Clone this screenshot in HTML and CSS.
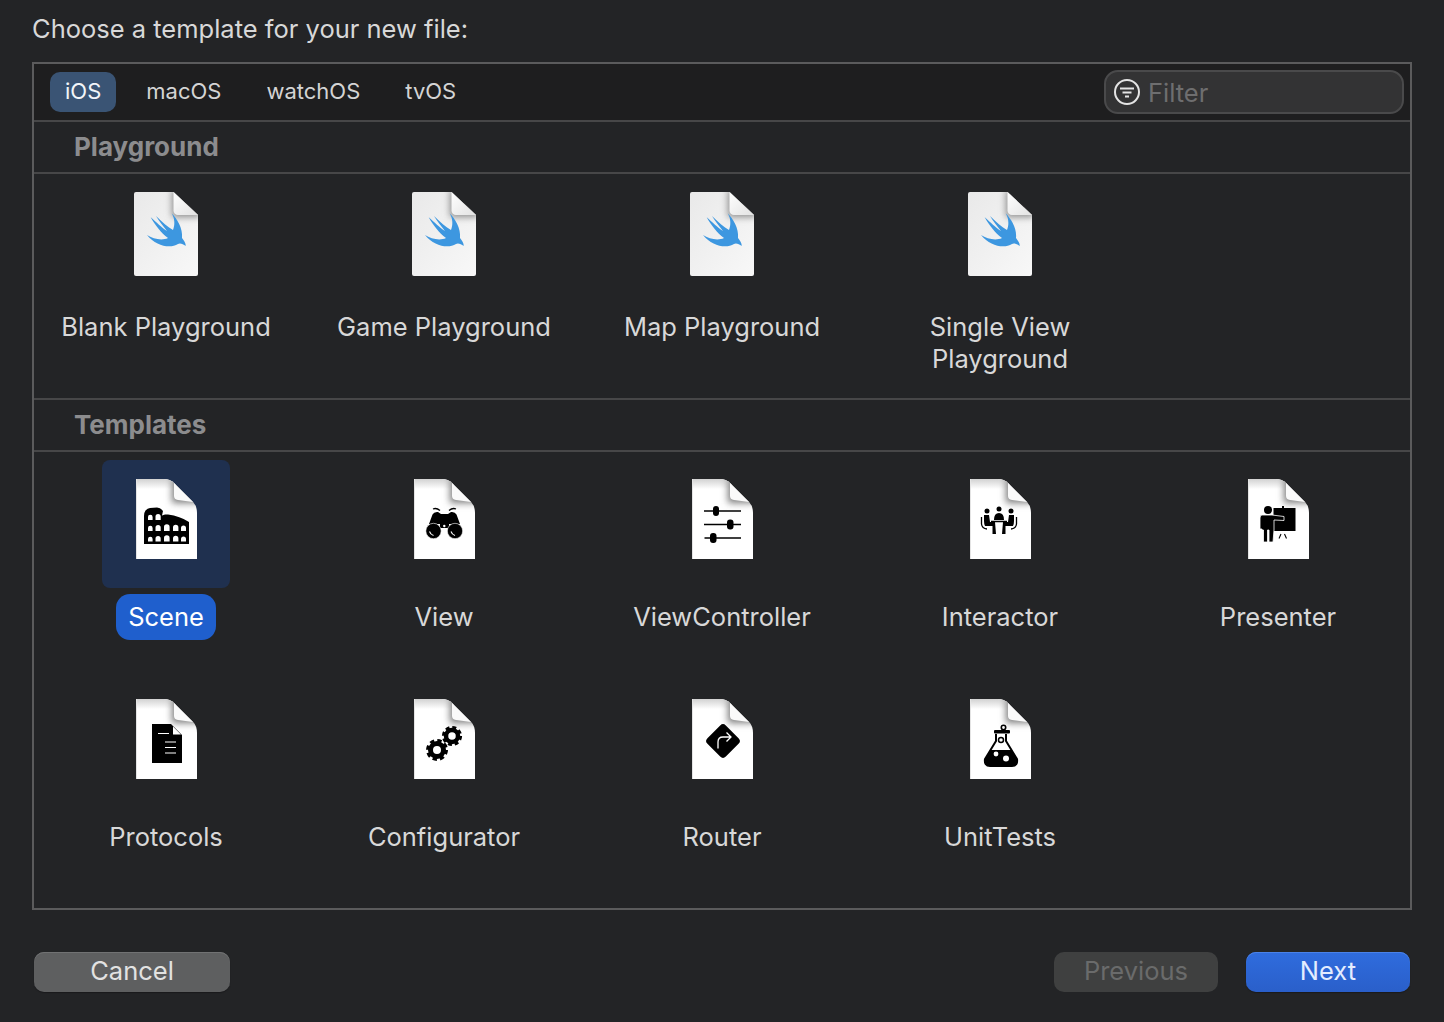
FILE: index.html
```html
<!DOCTYPE html>
<html lang="en">
<head>
  <meta charset="UTF-8">
  <title>Choose a template</title>
  <link rel="stylesheet" href="styles.css">
</head>
<body>
<svg class="defs" width="0" height="0" aria-hidden="true">
  <defs>
    <linearGradient id="swiftBody" x1="0" y1="0" x2="1" y2="1">
      <stop offset="0" stop-color="#e9e9e9"/>
      <stop offset="1" stop-color="#f8f8f8"/>
    </linearGradient>
    <linearGradient id="swiftFold" x1="0" y1="0" x2="1" y2="1">
      <stop offset="0" stop-color="#ffffff"/>
      <stop offset="1" stop-color="#e2e2e2"/>
    </linearGradient>
    <linearGradient id="fileTop" x1="0" y1="0" x2="0" y2="1">
      <stop offset="0" stop-color="#d2d2d2"/>
      <stop offset="1" stop-color="#ffffff"/>
    </linearGradient>
    <linearGradient id="fileLeft" x1="0" y1="0" x2="1" y2="0">
      <stop offset="0" stop-color="#c9c9c9"/>
      <stop offset="1" stop-color="#ffffff"/>
    </linearGradient>
    <filter id="soft" x="-50%" y="-50%" width="200%" height="200%">
      <feGaussianBlur stdDeviation="3.500"/>
    </filter>
    <clipPath id="swiftClip">
      <path d="M2 0H39.500L64 23V82a2 2 0 0 1-2 2H2a2 2 0 0 1-2-2V2a2 2 0 0 1 2-2Z"/>
    </clipPath>
    <clipPath id="fileClip">
      <path d="M0 0H28Q34 0 38 4L57 23Q61 27 61 34V80H0Z"/>
    </clipPath>

    <symbol id="swift-file" viewBox="0 0 64 84">
      <path d="M2 0H39.500L64 23V82a2 2 0 0 1-2 2H2a2 2 0 0 1-2-2V2a2 2 0 0 1 2-2Z" fill="url(#swiftBody)"/>
      <g clip-path="url(#swiftClip)">
        <path d="M38 -2H66V25H38Z" fill="#8c8c8c" filter="url(#soft)"/>
      </g>
      <path d="M39.500 0L64 23H44a4.500 4.500 0 0 1-4.500-4.500Z" fill="url(#swiftFold)"/>
      <path d="M37.700 21.300C43 27 49 36 48 46C50 49 52 51 51.700 54C49 52 46 50.500 44 52C36 57 22 54 13 43C19 47 28 49 34 46C27 41 21 33 16.700 25.300C22 30 28 36 33 39C29 34 25 29 22 24C28 30 34 35 39 38C41 33 41 27 37.700 21.300Z" fill="#3d97e0"/>
    </symbol>

    <symbol id="file" viewBox="0 0 61 80">
      <path d="M0 0H28Q34 0 38 4L57 23Q61 27 61 34V80H0Z" fill="#fff"/>
      <g clip-path="url(#fileClip)">
        <rect x="0" y="0" width="40" height="10" fill="url(#fileTop)"/>
        <path d="M36 0H63V24H36Z" fill="#7c7c7c" filter="url(#soft)"/>
        <rect x="0" y="0" width="1" height="80" fill="url(#fileLeft)"/>
      </g>
      <path d="M38 4L57 23L42 21Q38 20.500 38 17Z" fill="#fafafa"/>
    </symbol>
  </defs>
</svg>

<div class="page">
  <h1 class="title">Choose a template for your new file:</h1>

  <div class="chooser">
    <div class="toolbar">
      <div class="tabs">
        <span class="tab tab-active">iOS</span>
        <span class="tab">macOS</span>
        <span class="tab">watchOS</span>
        <span class="tab">tvOS</span>
      </div>
      <div class="filter">
        <svg class="filter-icon" width="28" height="28" viewBox="0 0 28 28">
          <circle cx="14" cy="14" r="12" fill="none" stroke="#e4e4e4" stroke-width="2"/>
          <path d="M7 10.500H21M9.500 14.500H18.500M12 18.500H16" fill="none" stroke="#e4e4e4" stroke-width="2"/>
        </svg>
        <span class="filter-text">Filter</span>
      </div>
    </div>

    <div class="section-head">Playground</div>
    <div class="grid grid-playground">
      <div class="item">
        <div class="tile"><svg class="swift-icon"><use href="#swift-file"/></svg></div>
        <div class="label">Blank Playground</div>
      </div>
      <div class="item">
        <div class="tile"><svg class="swift-icon"><use href="#swift-file"/></svg></div>
        <div class="label">Game Playground</div>
      </div>
      <div class="item">
        <div class="tile"><svg class="swift-icon"><use href="#swift-file"/></svg></div>
        <div class="label">Map Playground</div>
      </div>
      <div class="item">
        <div class="tile"><svg class="swift-icon"><use href="#swift-file"/></svg></div>
        <div class="label">Single View<br>Playground</div>
      </div>
    </div>

    <div class="section-head">Templates</div>
    <div class="grid grid-templates">
      <div class="item item-selected">
        <div class="tile">
          <svg class="file-icon" viewBox="0 0 61 80">
            <use href="#file" width="61" height="80"/>
            <path d="M8 65V37Q8 30 14 29L21 28.500Q25 29 27 32L26 36.500L29 35.500L32 35.500Q44 37 53 43V65Z"/>
            <g fill="#fff">
              <path d="M12 41V38a2.300 2.300 0 0 1 4.600 0V41ZM19.500 41V37.500a2.600 2.600 0 0 1 5.200 0V41Z"/>
              <path d="M12 52V49a2.300 2.300 0 0 1 4.600 0V52ZM19.500 52V48.500a2.600 2.600 0 0 1 5.200 0V52ZM28 52V48a2.800 2.800 0 0 1 5.600 0V52ZM37 52V48.500a2.700 2.700 0 0 1 5.400 0V52ZM45 52V49a2.500 2.500 0 0 1 5 0V52Z"/>
              <path d="M12 62.500V60a2.300 2.300 0 0 1 4.600 0V62.500ZM19.500 62.500V59.500a2.600 2.600 0 0 1 5.200 0V62.500ZM28 62.500V59a2.800 2.800 0 0 1 5.600 0V62.500ZM37 62.500V59.500a2.700 2.700 0 0 1 5.400 0V62.500ZM45 62.500V60a2.500 2.500 0 0 1 5 0V62.500Z"/>
            </g>
          </svg>
        </div>
        <div class="label">Scene</div>
      </div>

      <div class="item">
        <div class="tile">
          <svg class="file-icon" viewBox="0 0 61 80">
            <use href="#file" width="61" height="80"/>
            <path d="M15 45L18.500 35.500Q20 32.500 24 33L27 35H34L37 33Q41 32.500 42.500 35.500L46 45Z"/>
            <path d="M19 30Q22.500 28.500 26 31.500M35 31.500Q38.500 28.500 42 30" fill="none" stroke="#000" stroke-width="1.300"/>
            <rect x="26" y="44" width="9" height="5"/>
            <circle cx="19.500" cy="52" r="7.700" stroke="#fff" stroke-width=".6"/>
            <circle cx="41" cy="52" r="7.700" stroke="#fff" stroke-width=".6"/>
            <path d="M15.500 52.500Q16.500 55.500 19.500 56.500M37 52.500Q38 55.500 41 56.500" fill="none" stroke="#fff" stroke-width="1.100"/>
            <circle cx="30.300" cy="47" r="1.200" fill="#fff"/>
          </svg>
        </div>
        <div class="label">View</div>
      </div>

      <div class="item">
        <div class="tile">
          <svg class="file-icon" viewBox="0 0 61 80">
            <use href="#file" width="61" height="80"/>
            <path d="M12 32H49M12 45.500H49M12.500 59H49" fill="none" stroke="#000" stroke-width="1.300"/>
            <rect x="21" y="27" width="6" height="10" rx="3"/>
            <rect x="35" y="40.500" width="6.500" height="10" rx="3"/>
            <rect x="18" y="54" width="6.500" height="10" rx="3"/>
          </svg>
        </div>
        <div class="label">ViewController</div>
      </div>

      <div class="item">
        <div class="tile">
          <svg class="file-icon" viewBox="0 0 61 80">
            <use href="#file" width="61" height="80"/>
            <circle cx="17" cy="32" r="2.500"/>
            <circle cx="29" cy="30" r="2.500"/>
            <circle cx="41" cy="32" r="2.500"/>
            <path d="M24 41Q24 34 29 34Q34 34 34 41Z"/>
            <path d="M21 42.500H37" stroke="#000" stroke-width="1.500"/>
            <path d="M14 36H19L20 43H25L26 55H22.500V47H15Q14 45 14 42Z"/>
            <path d="M44 36H39L38 43H33L32 55H35.500V47H43Q44 45 44 42Z"/>
            <path d="M11.500 38V45Q12 49.500 17 50M46.500 38V45Q46 49.500 41 50" fill="none" stroke="#000" stroke-width="1.300"/>
          </svg>
        </div>
        <div class="label">Interactor</div>
      </div>

      <div class="item">
        <div class="tile">
          <svg class="file-icon" viewBox="0 0 61 80">
            <use href="#file" width="61" height="80"/>
            <rect x="25.500" y="29" width="22" height="23"/>
            <path d="M34 27H36V30H34Z"/>
            <circle cx="20" cy="31" r="4"/>
            <path d="M14 36H24L36 37.500V41.500L26 41V51L25 63H21V51H19.500V63H15.500V51H14V50H12V39Q12 36 14 36Z" stroke="#fff" stroke-width=".8"/>
            <path d="M33 55L31 59.500M36.500 55L38.500 59.500" fill="none" stroke="#000" stroke-width="1.100"/>
          </svg>
        </div>
        <div class="label">Presenter</div>
      </div>

      <div class="item">
        <div class="tile">
          <svg class="file-icon" viewBox="0 0 61 80">
            <use href="#file" width="61" height="80"/>
            <path d="M16 25H35L46 36V64H16Z"/>
            <path d="M37 27.500V35.500H45Z" fill="#fff"/>
            <path d="M22 34.500H33M29 43H40M29 48.500H40M29 54H40" fill="none" stroke="#fff" stroke-width="1.200"/>
          </svg>
        </div>
        <div class="label">Protocols</div>
      </div>

      <div class="item">
        <div class="tile">
          <svg class="file-icon" viewBox="0 0 61 80">
            <use href="#file" width="61" height="80"/>
            <circle cx="23" cy="51" r="6.500" fill="none" stroke="#000" stroke-width="5"/>
            <circle cx="23" cy="51" r="9.200" fill="none" stroke="#000" stroke-width="3.600" stroke-dasharray="4.200 3.030"/>
            <circle cx="38" cy="37" r="6" fill="none" stroke="#000" stroke-width="4.500"/>
            <circle cx="38" cy="37" r="8.500" fill="none" stroke="#000" stroke-width="3.200" stroke-dasharray="3.900 2.780"/>
          </svg>
        </div>
        <div class="label">Configurator</div>
      </div>

      <div class="item">
        <div class="tile">
          <svg class="file-icon" viewBox="0 0 61 80">
            <use href="#file" width="61" height="80"/>
            <rect x="18" y="29" width="26" height="26" rx="4" transform="rotate(45 31 42)"/>
            <path d="M26 49.500V43Q26 38 31 38H39M34.500 33.500L39 38L34.500 42.500" fill="none" stroke="#fff" stroke-width="1.300"/>
          </svg>
        </div>
        <div class="label">Router</div>
      </div>

      <div class="item">
        <div class="tile">
          <svg class="file-icon" viewBox="0 0 61 80">
            <use href="#file" width="61" height="80"/>
            <circle cx="33.500" cy="28.500" r="2.200" fill="none" stroke="#000" stroke-width="1.600"/>
            <rect x="24" y="31" width="16" height="3.500" rx="1"/>
            <path d="M26 35V42L15 60Q14 67 20 67H42Q48 67 47 60L36 42V35" fill="none" stroke="#000" stroke-width="2"/>
            <path d="M20.500 51H41.500L47 60Q48 67 42 67H20Q14 67 15 60Z"/>
            <circle cx="31" cy="41" r="2.500" fill="none" stroke="#000" stroke-width="1.500"/>
            <circle cx="26" cy="55" r="2.400" fill="#fff"/>
            <circle cx="36" cy="59.500" r="3" fill="#fff"/>
          </svg>
        </div>
        <div class="label">UnitTests</div>
      </div>
    </div>
  </div>

  <div class="footer">
    <button class="button button-cancel">Cancel</button>
    <div class="footer-right">
      <button class="button button-disabled">Previous</button>
      <button class="button button-primary">Next</button>
    </div>
  </div>
</div>
</body>
</html>
```

FILE: styles.css
```css
html, body {
    width: 100%;
    height: 100%;
    margin: 0;
    padding: 0;
    overflow: hidden;
    background: #232426;
    font-family: Inter, "Liberation Sans", sans-serif;
}

.defs {
    position: absolute;
}

.page {
    padding: 0 32px;
}

.title {
    height: 62px;
    margin: 0;
    font-size: 25.500px;
    font-weight: 400;
    line-height: 58px;
    color: #d8d8d8;
}

.chooser {
    border: 2px solid #5b5b5c;
}

.toolbar {
    height: 56px;
    padding: 0 6px 0 16px;
    box-sizing: border-box;
    display: flex;
    flex-direction: row;
    align-items: center;
    justify-content: space-between;
    background: #1e1e1f;
}

.tabs {
    display: flex;
    flex-direction: row;
    align-items: center;
    gap: 15px;
}

.tab {
    height: 40px;
    padding: 0 15px;
    border-radius: 10px;
    font-size: 22px;
    line-height: 39px;
    color: #d4d4d4;
}

.tab-active {
    background: #3a5474;
    color: #f2f5f9;
}

.filter {
    width: 300px;
    height: 44px;
    padding-left: 7px;
    box-sizing: border-box;
    display: flex;
    flex-direction: row;
    align-items: center;
    gap: 7px;
    background: #333334;
    border: 2px solid #4a4a4b;
    border-radius: 14px;
}

.filter-text {
    font-size: 25.500px;
    color: #6e6e6f;
}

.section-head {
    height: 50px;
    padding-left: 40px;
    border-top: 2px solid #474748;
    border-bottom: 2px solid #474748;
    font-size: 26px;
    font-weight: 700;
    line-height: 49px;
    color: #8c8c8e;
}

.grid {
    display: grid;
    grid-template-columns: repeat(5, 264px);
    column-gap: 14px;
}

.grid-playground {
    height: 224px;
}

.grid-templates {
    height: 456px;
    padding-top: 8px;
    box-sizing: border-box;
    grid-auto-rows: 220px;
}

.item {
    display: flex;
    flex-direction: column;
    align-items: center;
}

.tile {
    width: 128px;
    height: 128px;
    margin-bottom: 6px;
    padding-top: 19px;
    box-sizing: border-box;
    display: flex;
    justify-content: center;
    border-radius: 8px;
}

.grid-playground .tile {
    height: 124px;
    padding-top: 18px;
}

.swift-icon {
    width: 64px;
    height: 84px;
}

.file-icon {
    width: 61px;
    height: 80px;
}

.label {
    padding: 7px 12px;
    border-radius: 14px;
    font-size: 25.500px;
    line-height: 32px;
    text-align: center;
    color: #d8d8d8;
}

.item-selected .tile {
    background: #1f304f;
}

.item-selected .label {
    background: #1f5fcd;
    color: #ffffff;
}

.footer {
    height: 40px;
    margin-top: 42px;
    padding: 0 0 0 2px;
    display: flex;
    flex-direction: row;
    justify-content: space-between;
}

.footer-right {
    display: flex;
    flex-direction: row;
    gap: 28px;
    margin-right: 2px;
}

.button {
    height: 40px;
    padding: 0 0 4px;
    border: 0;
    border-radius: 10px;
    font-family: inherit;
    font-size: 25.500px;
}

.button-cancel {
    width: 196px;
    background: #5e5f60;
    box-shadow: inset 0 1px 0 #717273, 0 1px 1px #1a1a1c;
    color: #e2e2e2;
}

.button-disabled {
    width: 164px;
    background: #3f4040;
    color: #6a6b6b;
}

.button-primary {
    width: 164px;
    background: linear-gradient(#2f6cde, #2a5fca);
    box-shadow: inset 0 1px 0 #4a82e8, 0 1px 1px #1a1a1c;
    color: #e4edff;
}
```
